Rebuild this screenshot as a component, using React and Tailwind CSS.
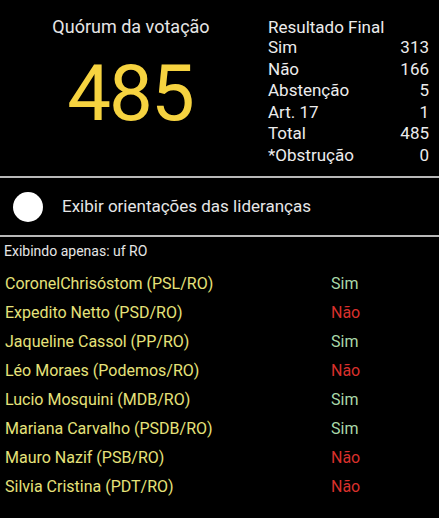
import React from 'react';

const resultado = [
    { label: 'Sim', value: 313 },
    { label: 'Não', value: 166 },
    { label: 'Abstenção', value: 5 },
    { label: 'Art. 17', value: 1 },
    { label: 'Total', value: 485 },
    { label: '*Obstrução', value: 0 },
];

const deputados = [
    { nome: 'CoronelChrisóstom (PSL/RO)', voto: 'Sim' },
    { nome: 'Expedito Netto (PSD/RO)', voto: 'Não' },
    { nome: 'Jaqueline Cassol (PP/RO)', voto: 'Sim' },
    { nome: 'Léo Moraes (Podemos/RO)', voto: 'Não' },
    { nome: 'Lucio Mosquini (MDB/RO)', voto: 'Sim' },
    { nome: 'Mariana Carvalho (PSDB/RO)', voto: 'Sim' },
    { nome: 'Mauro Nazif (PSB/RO)', voto: 'Não' },
    { nome: 'Silvia Cristina (PDT/RO)', voto: 'Não' },
];

export default function App() {
    return (
        <div className="w-[439px] h-[518px] bg-black overflow-hidden font-['Roboto',sans-serif]">
            {/* Quórum + resultado */}
            <div className="flex h-[176px] pt-[14px]">
                <div className="w-[264px] flex flex-col items-center">
                    <p className="text-[18px] leading-[26px] text-[#e6e6e6] pr-[2px]">Quórum da votação</p>
                    <p className="text-[78px] leading-[80px] tracking-[-2px] text-[#f6d340] mt-[14px] pr-[4px]">485</p>
                </div>
                <div className="flex-1 pl-[4px] pr-[10px] text-[17px] leading-[21.6px] text-[#ececec]">
                    <p className="h-[23px] leading-[26px]">Resultado Final</p>
                    {resultado.map((r) => (
                        <div key={r.label} className="flex justify-between">
                            <span>{r.label}</span>
                            <span>{r.value}</span>
                        </div>
                    ))}
                </div>
            </div>

            <div className="h-[2px] bg-[#b8b8b8]" />

            {/* Toggle */}
            <div className="flex items-center h-[57px] pl-[13px]">
                <div className="w-[30px] h-[30px] rounded-full bg-white" />
                <span className="ml-[19px] text-[17px] text-[#e6e6e6]">Exibir orientações das lideranças</span>
            </div>

            <div className="h-[2px] bg-[#b8b8b8]" />

            <p className="pl-[4px] pt-[5px] text-[14px] leading-[18px] text-[#e6e6e6]">Exibindo apenas: uf RO</p>

            {/* Lista */}
            <div className="mt-[9px]">
                {deputados.map((d) => (
                    <div key={d.nome} className="flex items-center h-[29px] text-[16px]">
                        <span className="w-[331px] pl-[5px] text-[#e6e27a]">{d.nome}</span>
                        <span className={d.voto === 'Sim' ? 'text-[#a9d9a9]' : 'text-[#d9302c]'}>{d.voto}</span>
                    </div>
                ))}
            </div>
        </div>
    );
}
